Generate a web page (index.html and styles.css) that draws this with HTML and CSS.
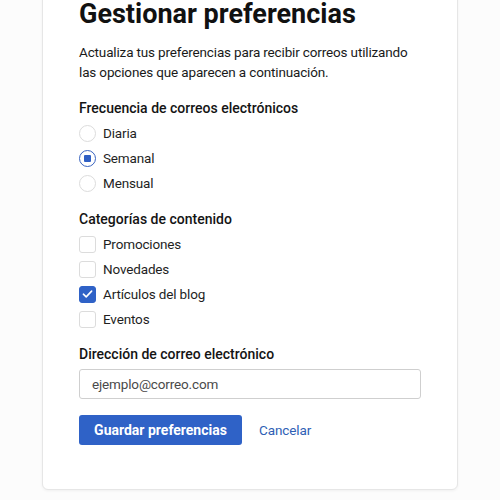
FILE: index.html
```html
<!DOCTYPE html>
<html lang="es">
<head>
<meta charset="utf-8">
<title>Gestionar preferencias</title>
<link rel="stylesheet" href="styles.css">
</head>
<body>
<main class="card">
  <h1 class="title">Gestionar preferencias</h1>
  <p class="intro">Actualiza tus preferencias para recibir correos utilizando las opciones que aparecen a continuación.</p>

  <section class="group group-freq">
    <div class="group-label">Frecuencia de correos electrónicos</div>
    <label class="option"><span class="radio"></span><span>Diaria</span></label>
    <label class="option"><span class="radio checked"></span><span>Semanal</span></label>
    <label class="option"><span class="radio"></span><span>Mensual</span></label>
  </section>

  <section class="group group-cat">
    <div class="group-label">Categorías de contenido</div>
    <label class="option"><span class="check"></span><span>Promociones</span></label>
    <label class="option"><span class="check"></span><span>Novedades</span></label>
    <label class="option"><span class="check checked"><svg viewBox="0 0 16 16" width="16" height="16"><path d="M3.6 8.2 L6.6 11.1 L12.4 4.9" fill="none" stroke="#fff" stroke-width="1.7" stroke-linecap="round" stroke-linejoin="round"/></svg></span><span>Artículos del blog</span></label>
    <label class="option"><span class="check"></span><span>Eventos</span></label>
  </section>

  <section class="group group-email">
    <div class="group-label">Dirección de correo electrónico</div>
    <div class="input">ejemplo@correo.com</div>
  </section>

  <div class="actions">
    <button class="btn-primary">Guardar preferencias</button>
    <a class="btn-link">Cancelar</a>
  </div>
</main>
</body>
</html>
```

FILE: styles.css
```css
html, body {
  margin: 0;
  padding: 0;
  background: #fcfcfc;
}
body {
  font-family: Roboto, "Noto Sans", sans-serif;
  color: #1a1a1a;
  height: 500px;
  overflow: hidden;
}
.card {
  box-sizing: border-box;
  width: 416px;
  margin: -33px auto 0;
  padding: 30px 36px 44px;
  background: #fff;
  border: 1px solid #e6e6e6;
  border-radius: 6px;
  box-shadow: 0 1px 3px rgba(0,0,0,0.05);
}
.title {
  margin: 0;
  font-size: 27px;
  line-height: 32px;
  font-weight: 700;
  color: #111;
}
.intro {
  margin: 12px 0 0;
  font-size: 13.5px;
  line-height: 20px;
  letter-spacing: -0.15px;
  color: #1a1a1a;
}
.group {
  display: flex;
  flex-direction: column;
  gap: 5px;
}
.group-freq { margin-top: 16px; }
.group-cat { margin-top: 16px; }
.group-email { margin-top: 15px; }
.group-label {
  font-size: 14px;
  line-height: 20px;
  font-weight: 500;
  color: #141414;
}
.option {
  display: flex;
  align-items: center;
  gap: 7px;
  height: 20px;
  font-size: 13.5px;
  letter-spacing: -0.15px;
  color: #1f1f1f;
}
.radio {
  box-sizing: border-box;
  width: 17px;
  height: 17px;
  border-radius: 50%;
  border: 1px solid #dcdcdc;
  background: #fff;
  display: flex;
  align-items: center;
  justify-content: center;
}
.radio.checked {
  border: 1.5px solid #3a64c0;
}
.radio.checked::after {
  content: "";
  width: 7px;
  height: 7px;
  background: #2f5fc4;
  border-radius: 1px;
}
.check {
  box-sizing: border-box;
  width: 17px;
  height: 17px;
  border-radius: 3px;
  border: 1px solid #dcdcdc;
  background: #fff;
  display: flex;
  align-items: center;
  justify-content: center;
}
.check.checked {
  background: #2f62c7;
  border-color: #2f62c7;
}
.input {
  box-sizing: border-box;
  height: 30px;
  border: 1px solid #cfcfcf;
  border-radius: 3px;
  padding: 0 12px;
  display: flex;
  align-items: center;
  font-size: 13.5px;
  letter-spacing: -0.15px;
  color: #4a4a4a;
}
.actions {
  margin-top: 16px;
  display: flex;
  align-items: center;
  gap: 17px;
}
.btn-primary {
  height: 30px;
  width: 163px;
  border: 0;
  border-radius: 3px;
  background: #2f62c7;
  color: #fff;
  font-family: inherit;
  font-size: 14px;
  font-weight: 700;
  padding: 0;
}
.btn-link {
  color: #2f5fb5;
  font-size: 13.5px;
  letter-spacing: -0.1px;
}
```
